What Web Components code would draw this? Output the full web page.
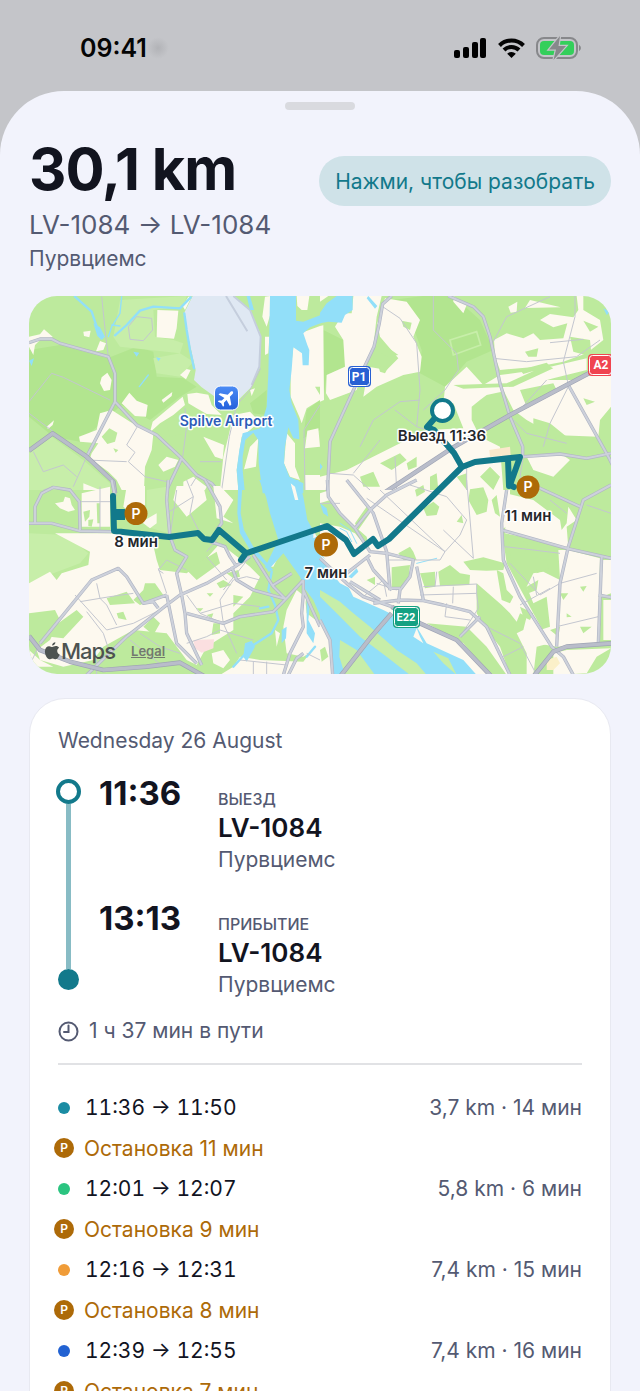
<!DOCTYPE html>
<html lang="ru">
<head>
<meta charset="utf-8">
<meta name="viewport" content="width=device-width, initial-scale=1">
<title>30,1 km</title>
<style>
  body {
    margin: 0;
    font-family: Inter, "Noto Sans", sans-serif;
    color: #12141f;
    --teal: #12798b;
    --muted: #545a72;
    --stop: #ad6a08;
  }
</style>
</head>
<body>
<trip-app>
  <status-bar slot="status" time="09:41"></status-bar>
  <trip-header distance="30,1 km" route="LV-1084 → LV-1084" place="Пурвциемс">Нажми, чтобы разобрать</trip-header>
  <trip-map></trip-map>
  <trip-card date="Wednesday 26 August" total="1 ч 37 мин в пути">
    <trip-end slot="ends" time="11:36" label="ВЫЕЗД" name="LV-1084">Пурвциемс</trip-end>
    <trip-end slot="ends" time="13:13" label="ПРИБЫТИЕ" name="LV-1084">Пурвциемс</trip-end>
    <trip-leg color="#1b8ca3" times="11:36 → 11:50">3,7 km · 14 мин</trip-leg>
    <trip-stop>Остановка 11 мин</trip-stop>
    <trip-leg color="#2bc480" times="12:01 → 12:07">5,8 km · 6 мин</trip-leg>
    <trip-stop>Остановка 9 мин</trip-stop>
    <trip-leg color="#f09c38" times="12:16 → 12:31">7,4 km · 15 мин</trip-leg>
    <trip-stop>Остановка 8 мин</trip-stop>
    <trip-leg color="#2262d2" times="12:39 → 12:55">7,4 km · 16 мин</trip-leg>
    <trip-stop>Остановка 7 мин</trip-stop>
  </trip-card>
</trip-app>

<!-- The ground is drawn in four tiles at 3 units per map unit. -->
<template id="map-template">
  <style>
    :host { display: block; flex: none; position: relative; border-radius: 28px; overflow: hidden; }
    svg { display: block; width: 100%; height: auto; }
    .land { fill: #fdf9ef; }
    .park { fill: #bdea9d; }
    .wood { fill: #b2e58f; }
    .lite { fill: #c7eea9; }
    .water { fill: #92dff9; }
    .creek { fill: none; stroke: #92dff9; stroke-width: 7; stroke-linecap: round; stroke-linejoin: round; }
    .edge, .road, .lane { fill: none; stroke-linejoin: round; }
    .edge { stroke: #b1b6c4; stroke-width: 10; }
    .road { stroke: #cdd1db; stroke-width: 6; }
    .big .edge { stroke: #9fa4b4; stroke-width: 14; }
    .big .road { stroke: #b9bdca; stroke-width: 10; }
    .lane { stroke: #c3c6cf; stroke-width: 3; }
    text { font-weight: 600; text-anchor: middle; }
    .label { font-size: 15px; fill: #25272c; stroke: #fff; stroke-width: 3; stroke-linejoin: round; paint-order: stroke; }
    .airport { font-size: 14px; fill: #2d5cb8; }
    .shield { font-family: Roboto, sans-serif; font-size: 12px; font-weight: 700; fill: #fff; }
    .pin circle { fill: var(--stop); }
    .pin text { font-size: 14px; fill: #fff; }
    .route { fill: none; stroke: var(--teal); stroke-width: 6; stroke-linecap: round; stroke-linejoin: round; }
    .credit {
      position: absolute; left: 14px; bottom: 10px;
      display: flex; align-items: center; color: #4d5351;
      font-size: 22px; line-height: 26px; font-weight: 500; letter-spacing: -1px;
    }
    .credit svg { width: 18px; height: 20px; }
    .credit a { margin-left: 16px; font-size: 13px; letter-spacing: 0; font-weight: 600; color: #72796f; }
  </style>
  <svg viewBox="0 0 582 378" role="img" aria-label="Карта поездки">
    <defs>
      <linearGradient id="plane-bg" x2="0" y2="1"><stop stop-color="#4b8cf5"/><stop offset="1" stop-color="#2460db"/></linearGradient>
    </defs>
    <rect width="582" height="378" class="park"/>
    <g transform="scale(.33333333)">
      <!-- north west -->
      <g transform="translate(-27 -18)">
        <path class="wood" d="M27 180 120 165 262 205 350 170 400 185 410 260 490 265 530 290 480 320 390 390 305 345 180 455 100 440 27 380zM355 85 395 80 400 130 370 155 325 145 330 105zM690 340 740 300 740 375 700 370zM860 360 900 330V420L850 445z"/>
        <path class="lite" d="M300 30 500 18 490 50 400 60 405 140 460 150 490 160 480 190 300 170 280 140zM400 205 480 190 520 215 480 260 410 250zM27 490 95 440 190 510 270 580 270 600 27 600z"/>
        <path class="land" d="M412 60 475 62 470 115 462 146 410 142zM27 140 60 133 72 118 98 140 90 150 60 150 45 165 40 195 27 170zM190 125 212 122 208 142 192 138zM240 153 258 160 250 180 228 184zM245 262 262 248 275 270 270 300 252 303 240 280zM305 340 328 308 350 332 383 345 378 380 345 378zM425 330 457 306 455 318 430 338zM390 427 398 395 440 360 488 320 495 345 460 375 420 400zM502 312 530 308 565 314 575 345 605 375 560 372 530 355 505 340zM480 255 500 237 512 240 498 268zM240 370 275 360 330 395 400 432 395 480 375 530 372 600 305 600 290 570 265 545 210 505 215 490 235 460 180 455 177 440 230 420zM80 410 102 391 98 405 84 417zM415 525 440 500 475 510 465 530 430 545zM550 440 612 465 608 508 585 500zM490 575 520 560 560 590 555 600 490 600zM640 375 690 365 718 395 690 420 665 440 650 540 655 600 600 600 610 500 625 440zM690 470 715 445 708 530 672 538zM190 580 240 600 190 600zM735 20 750 18 752 70 740 110 727 80zM735 140 748 140 745 190 735 195zM505 20 515 20 495 60 488 48zM830 18 868 18 862 60 845 60 832 48zM845 128 900 108 900 330 860 355 845 400 838 380 812 320 812 240 820 172zM862 422 895 415 900 470 855 475zM855 555 900 555 900 600 855 600zM800 430 825 460 825 530 840 570 810 560 792 520zM690 300 705 295 695 318z"/>
        <path class="park" d="M245 440 268 415 292 428 285 455 262 462zM280 475 295 480 287 488zM440 400 490 385 500 430 450 440zM885 290 900 290 900 315z"/>
        <path fill="#dfe8f3" d="M518 18 640 18 690 60 720 130 720 230 695 290 640 345 585 320 545 292 522 270 527 240 500 120 492 70z"/>
        <path fill="none" stroke="#c5cedd" stroke-width="6" d="M618 18 682 124M640 18 690 60 722 140 718 230 695 285"/>
        <path class="water" d="M750 18H828V92L850 95 902 75V100L870 112 850 130 862 165 868 180 866 226 848 226 846 190 820 172 815 240 808 300 815 340 835 390 838 448 820 445 805 412 795 470 792 520 808 560 850 580V610H728L716 520 715 450 700 428 676 450 668 500 668 540 674 600 655 600 650 540 658 480 668 430 720 415 740 350 745 250 748 120zM220 100 240 112 255 140 245 150 232 138zM340 185 358 188 350 200zM408 202 422 205 415 214zM27 212 42 205 35 228zM680 18 690 18 702 60 690 60z"/>
        <path class="creek" d="M165 20 215 65 230 110 240 140M285 136 320 105 360 62 400 50 480 55 512 22M493 70 500 120 510 180 522 235"/>
        <path class="creek" style="stroke-width:4" d="M305 20 300 70 275 110 265 140M275 105 300 108M385 255 358 290"/>
        <path class="lane" d="M245 20 258 145 265 200M27 335 95 250 130 262 270 330M495 355 500 410 488 500M722 235 690 300 650 345 628 440 605 600M855 600 852 420 900 345M352 410 320 465 345 487 325 515 375 560M200 510 320 515M27 370 100 425M40 485 70 545 130 525 170 560M375 560 440 575M540 515 605 515M505 600 530 560M70 600 95 592 140 600M200 500 160 590M325 110 350 80 395 85 398 120 370 152 330 148z"/>
        <path class="edge" d="M27 158 60 147 95 147 120 160 265 200 285 250 285 335 200 500M285 335 350 405 410 435 485 505 530 555 575 580 600 610M485 505 440 600"/>
        <path class="road" d="M27 158 60 147 95 147 120 160 265 200 285 250 285 335 200 500M285 335 350 405 410 435 485 505 530 555 575 580 600 610M485 505 440 600"/>
        <g class="big">
          <path class="edge" d="M27 482 98 430 200 500 280 575 285 610"/>
          <path class="road" d="M27 482 98 430 200 500 280 575 285 610"/>
        </g>
      </g>
      <!-- north east -->
      <g transform="translate(873 -18)">
        <path class="wood" d="M215 30 310 18 400 18 480 90 520 180 440 215 375 290 300 250 305 180 260 60zM10 120 70 150 75 230 20 255 10 330zM640 330 700 290 720 320z"/>
        <path class="land" d="M0 108 10 106 12 330 0 335zM100 18 185 18 170 80 160 170 130 230 110 300 30 330 18 310 20 255 75 230 70 150 45 110 70 70 95 70zM195 25 260 35 300 90 280 140 305 200 300 245 250 255 170 290 130 320 145 230 200 240 235 205 180 140 172 100zM375 290 440 230 490 285 540 255 650 240 800 205 800 240 700 265 570 300 500 315 480 330 455 350 455 390 480 440 540 470 550 600 0 600 0 560 80 540 240 460 320 420 430 415 400 340 370 345zM522 150 560 130 610 145 640 130 660 150 730 145 742 100 700 112 660 90 690 72 760 82 775 60 770 18 790 18 790 60 840 90 850 150 800 190 730 215 650 230 540 240 525 200zM630 30 722 52 615 54zM400 18 440 45 430 70 400 35zM565 50 592 35 590 65 572 68zM545 290 680 270 770 270 873 235 873 350 840 390 835 440 700 435 620 390 580 360zM0 18 25 18 0 35zM620 500 720 490 750 510 700 560 640 540z"/>
        <path class="park" d="M165 145 235 195 200 200 170 180zM175 228 205 232 195 250 180 245zM245 92 275 98 270 120 250 110zM615 185 655 175 650 200 625 200zM790 92 835 110 810 125zM750 140 810 150 815 200 760 185zM400 285 560 280 680 225 700 235 580 290 430 296zM600 300 700 280 710 300 620 350zM640 385 690 400 740 440 720 450 640 415zM790 325 825 335 800 345zM180 520 240 490 260 510 215 540zM260 520 290 500 290 530 265 540zM120 560 160 545 180 590 130 590zM330 560 350 550 355 600 330 600zM480 560 510 530 540 560 520 600zM410 560 440 550 440 600zM600 240 680 218 690 228 610 252z"/>
        <path fill="none" stroke="#c7eea9" stroke-width="5" d="M390 150 470 125 482 165 400 195z"/>
        <path fill="#fae8cb" d="M508 480 570 470 572 498 510 500z"/>
        <path class="water" d="M0 68 20 40 50 18H98V60L75 75 65 98 25 95 0 100zM145 18 172 48 165 56 140 25zM850 55 870 65 860 75zM0 520 8 530 0 540z"/>
        <path class="lane" d="M188 50 240 85 290 160 300 300 290 410M340 18 340 120 410 190 415 240 375 300 310 360M520 205 620 215 770 200 840 150M690 158 790 148M765 18 765 80 730 215 745 285M560 80 690 20M520 155 560 80M745 290 690 400 670 470M300 330 240 335 160 390 120 470M570 380 620 430 740 460M590 370 680 270M225 500 230 600M28 550 100 555 150 600M100 550 180 450M610 500 600 560 660 600M440 530 440 600M225 360 290 410 320 420"/>
        <path class="edge" d="M215 18 188 42 178 100 162 170 105 290 30 455 22 610M385 18 460 50 490 80 510 140 540 280 570 380 608 470 608 500M745 285 865 500 880 530M610 500 720 492 800 505 873 490"/>
        <path class="road" d="M215 18 188 42 178 100 162 170 105 290 30 455 22 610M385 18 460 50 490 80 510 140 540 280 570 380 608 470 608 500M745 285 865 500 880 530M610 500 720 492 800 505 873 490"/>
        <g class="big">
          <path class="edge" d="M873 215 740 285 570 375 395 475 190 610"/>
          <path class="road" d="M873 215 740 285 570 375 395 475 190 610"/>
        </g>
      </g>
      <!-- south west -->
      <g transform="translate(-27 552)">
        <path class="lite" d="M27 160 140 165 205 220 180 250 100 280 27 310zM380 30 440 20 445 160 380 140z"/>
        <path class="land" d="M105 160 270 160 395 175 410 240 420 270 500 280 560 235 600 190 690 260 720 290 690 350 640 400 640 450 560 500 530 555 500 540 440 460 340 450 250 500 220 540 130 560 60 540 50 510 90 480 120 420 105 390 27 400 27 310 90 275 110 300 125 280 205 255 210 215zM105 70 130 65 135 50 150 55 155 75 165 90 145 95 120 85zM185 40 270 20 270 140 185 140zM320 18 375 18 375 120 410 100 410 130 390 145 370 130 310 80zM470 18 550 18 560 60 500 110 460 60zM580 18 600 18 640 60 610 110 640 130 590 115zM660 530 720 540 850 545 900 480 900 585 600 585 640 560zM575 520 610 510 630 540 610 565 580 550zM800 390 830 330 855 350 860 400 900 430 900 500 850 530 800 520 790 440zM765 450 780 460 770 500zM27 510 60 540 100 560 27 560zM740 260 780 190 790 200 760 260z"/>
        <path class="park" d="M190 95 210 90 208 110 195 125zM205 120 220 118 215 140 205 138zM230 70 240 70 240 130 232 130zM260 355 320 335 345 370 270 375zM100 440 170 390 190 410 130 475 90 470zM340 360 370 330 375 310 405 310 430 345 360 375zM290 400 310 395 320 420 295 415zM370 440 400 410 420 430 400 465zM500 270 590 215 600 250 530 300zM560 340 580 340 570 350zM590 310 610 300 635 315 600 325zM620 280 655 270 660 290 640 295zM640 345 670 350 640 380zM560 405 580 400 575 415zM580 430 600 430 600 460 575 465zM530 385 550 385 540 395zM660 480 700 460 710 500 670 530z"/>
        <path fill="#fbdfe0" d="M520 480 582 478 580 505 545 518 525 505z"/>
        <path class="water" d="M718 0H835L850 50 862 120 902 190V410L880 360 850 320 840 290 790 220 745 270 735 262 775 180 750 100 738 50zM655 0 668 0 662 100 672 150 700 200 760 270 745 275 735 255 690 210 660 160 652 100zM675 490 695 482 705 500 680 545 670 530zM785 450 800 440 798 475 785 490zM860 350 870 370 865 420 885 460 880 490 860 460z"/>
        <path class="creek" d="M755 275 745 330 765 375 775 420 755 460 700 495 640 560M720 385 745 380M885 500 860 530"/>
        <path class="land" d="M812 10 825 20 835 60 825 60zM880 150 890 170 880 175zM845 340 860 350 855 370z"/>
        <path class="lane" d="M180 65 270 65M240 20 240 150M500 0 520 50 440 100M520 50 510 100 540 160M180 365 270 350 340 340M200 395 250 460 270 520M165 345 260 450 340 430 440 380M230 310 240 355 260 375 290 435M450 170 470 30M415 265 440 340M430 280 415 270 440 240 500 270M500 345 540 400 610 430 650 520M500 490 560 470 600 450 700 480M610 430 600 360 640 300 680 290 720 300M540 400 640 370 720 380M560 230 620 300M590 180 560 215M690 230 610 330M27 560 60 490M230 530 230 585M360 460 420 500 480 520M740 545 740 585M700 545 700 585M860 520 900 540M660 540 800 555M330 480 430 560"/>
        <path class="edge" d="M27 130 95 130 180 153 275 155M45 130 45 80 65 40 100 22 150 30 178 65 180 150M275 0 285 50M60 490 215 300 295 265 320 290 370 370 440 345M445 0 440 60 450 170 465 210 500 230 470 280 485 345 495 400 500 460 545 555M200 585 320 470 440 375 480 345 560 310 645 260 690 230M440 345 470 490 530 550M555 0 600 80 605 130 590 150M500 400 610 430 660 410 760 395 790 365 850 300M650 260 630 230 615 200 570 185M635 260 650 300 700 330 790 355M700 225 760 320 795 355M760 315 815 280M850 300 850 340 845 400 850 440 810 520 790 585M850 330 900 440M850 520 830 535 805 585M370 370 400 365 415 385"/>
        <path class="road" d="M27 130 95 130 180 153 275 155M45 130 45 80 65 40 100 22 150 30 178 65 180 150M275 0 285 50M60 490 215 300 295 265 320 290 370 370 440 345M445 0 440 60 450 170 465 210 500 230 470 280 485 345 495 400 500 460 545 555M200 585 320 470 440 375 480 345 560 310 645 260 690 230M440 345 470 490 530 550M555 0 600 80 605 130 590 150M500 400 610 430 660 410 760 395 790 365 850 300M650 260 630 230 615 200 570 185M635 260 650 300 700 330 790 355M700 225 760 320 795 355M760 315 815 280M850 300 850 340 845 400 850 440 810 520 790 585M850 330 900 440M850 520 830 535 805 585M370 370 400 365 415 385"/>
        <g class="big">
          <path class="edge" d="M27 468 60 510 150 545 250 570 380 560 480 548 555 590"/>
          <path class="road" d="M27 468 60 510 150 545 250 570 380 560 480 548 555 590"/>
        </g>
      </g>
      <!-- south east -->
      <g transform="translate(873 552)">
        <path class="land" d="M0 40 30 30H570V130L545 150 560 250 640 400 690 490 650 500 640 585H0z"/>
        <path class="land" d="M555 160 700 190 745 205 740 140 770 120 745 80 740 130 725 150 720 120 640 60 560 40zM640 280 670 275 720 300 715 210 745 210 840 235 835 490 710 500 650 490 660 450 690 440 680 350 640 370 620 320zM845 240 873 240 873 340 845 350zM850 360 873 360 873 480 850 480zM700 520 740 510 873 505 830 530 800 580 700 585z"/>
        <path class="park" d="M0 70 30 60 60 100 140 170 150 215 105 160 60 140 0 130zM450 28 490 22 505 60 500 95 470 105 445 60zM285 30 310 15 315 35 290 50zM310 85 340 65 358 80 350 105 320 108zM515 60 530 45 540 110 525 100zM410 125 425 105 430 130zM105 130 140 80 150 100 115 150zM430 245 490 232 555 250 550 270 500 272 450 270zM355 275 390 255 420 280 450 285 448 315 360 318zM215 262 270 255 265 300 240 330 215 320zM300 280 345 275 345 320 315 325zM235 220 270 200 280 215 290 240 250 240zM530 270 550 280 560 330 580 350 570 370 545 360zM470 310 545 375 570 400 590 425 600 400 620 410 610 450 590 460 620 520 620 585 570 585 540 500 500 450 470 400zM590 175 625 190 615 220 575 250 565 190zM645 230 680 240 685 265 650 280zM620 320 655 300 650 330 625 340zM600 380 640 400 630 420 610 410zM140 300 165 290 165 315zM720 340 745 340 730 360zM780 320 800 318 790 335zM690 450 720 440 715 470zM740 400 755 410 740 412zM780 440 815 440 790 460zM320 430 440 440 500 500 560 585 510 585 430 490z"/>
        <path class="water" d="M0 215 30 260 80 310 100 350 190 390 290 440 320 490 430 540 470 585H0z"/>
        <path class="water" d="M0 70 20 85 25 110 10 100zM85 290 110 265 115 275 95 295z"/>
        <path class="lite" d="M0 330 60 365 100 400 150 440 230 510 290 550 320 585H270L200 530 120 470 50 400 0 350zM60 480 110 510 165 585H75L58 530zM340 515 385 535 410 585 370 550z"/>
        <path class="land" d="M0 420 30 480 38 585H0zM280 470 290 445 300 470 310 490zM0 225 60 275 75 290 85 310 110 335 60 310 20 260z"/>
        <path class="park" d="M0 510 15 500 25 530 5 545z"/>
        <path fill="#fbf0c9" d="M680 540 710 530 720 550 700 570 680 570z"/>
        <path class="creek" style="stroke-width:3" d="M60 130 90 150 110 190M290 250 350 235M60 145 80 155 95 185"/>
        <path class="lane" d="M140 55 375 215M180 30 375 215 420 165 440 120M270 15 380 50 440 120M370 150 460 235M440 0 460 235M200 240 360 240 375 215M345 320 350 275M310 320 470 312 470 340 300 345M400 320 398 370M380 370 375 410 450 420M470 340 475 385 420 470M570 250 660 345 720 310 830 280M600 375 690 325M500 440 600 490 650 585M550 530 610 500M710 440 835 410M0 70 60 70M130 350 190 300 200 350M170 310 230 330M555 200 640 210 720 220M690 60 740 100M800 75 873 100M650 345 640 290"/>
        <path class="edge" d="M22 0 25 50 60 100 105 145 150 215 200 220 280 240 270 290 240 330 235 370M105 145 150 90 200 45 290 0M80 0 160 100 200 215 210 330M80 280 150 225M140 230 160 270 215 330M0 235 80 310 130 350 215 380M160 370 240 360 310 362 370 375 450 395 500 440 570 585M290 260 310 360M420 470 480 410M560 30 545 130 550 240 600 350 695 500 730 530 760 585M545 150 740 205 873 235M650 20 780 80M873 15 790 60 745 200 720 310 710 500M845 230 835 490M835 345 873 352M210 325 240 325M0 420 30 480 38 585M90 305 180 360"/>
        <path class="road" d="M22 0 25 50 60 100 105 145 150 215 200 220 280 240 270 290 240 330 235 370M105 145 150 90 200 45 290 0M80 0 160 100 200 215 210 330M80 280 150 225M140 230 160 270 215 330M0 235 80 310 130 350 215 380M160 370 240 360 310 362 370 375 450 395 500 440 570 585M290 260 310 360M420 470 480 410M560 30 545 130 550 240 600 350 695 500 730 530 760 585M545 150 740 205 873 235M650 20 780 80M873 15 790 60 745 200 720 310 710 500M845 230 835 490M835 345 873 352M210 325 240 325M0 420 30 480 38 585M90 305 180 360"/>
        <g class="big">
          <path class="edge" d="M60 590 150 475 215 400M215 380 300 430 410 480 515 590M640 590 700 515 740 500 873 490"/>
          <path class="road" d="M60 590 150 475 215 400M215 380 300 430 410 480 515 590M640 590 700 515 740 500 873 490"/>
        </g>
      </g>
    </g>

    <path class="route" d="M84 200 85 235 140 241 169 237 175 243 183 244 190 234 217 257 212 264M218 257 298 230 317 244 325 258 344 243 349 250 360 243 433 171 446 166 491 161 481 189 485 191M479 163 480 190M433 171 425 157 405 134 398 131 413 114"/>
    <path d="M85 213h11v11H85z" fill="var(--teal)"/>

    <rect x="185.500" y="90" width="24" height="24" rx="6" fill="url(#plane-bg)" stroke="#fff" stroke-width="1"/>
    <path transform="translate(197.500 102) rotate(45)" fill="#fff" d="M0-9c1 0 1.500 1.300 1.500 3v2.800L8 1.200v2L1.500 1.400v3.800l2.200 1.900v1.500L0 7.600l-3.700 1V7.100l2.200-1.900V1.400L-8 3.200v-2l6.500-4.400V-6c0-1.700.5-3 1.500-3z"/>
    <text class="label airport" x="197" y="130">Spilve Airport</text>

    <rect x="319" y="70" width="23" height="21" rx="4" fill="#2860d3"/><rect x="320.500" y="71.500" width="20" height="18" rx="3" fill="none" stroke="#fff"/>
    <text class="shield" x="330" y="85">P1</text>
    <rect x="559" y="58" width="25" height="22" rx="4" fill="#f04450"/><rect x="560.500" y="59.500" width="22" height="19" rx="3" fill="none" stroke="#fff"/>
    <text class="shield" x="572" y="73">A2</text>
    <rect x="364" y="310" width="27" height="22" rx="4" fill="#15a183"/><rect x="365.500" y="311.500" width="24" height="19" rx="3" fill="none" stroke="#fff"/>
    <text class="shield" style="font-size:11px" x="377" y="325">E22</text>

    <circle cx="413.500" cy="114.500" r="10.500" fill="#fff" stroke="var(--teal)" stroke-width="4"/>
    <g class="pin"><circle cx="107" cy="217.500" r="11.500"/><text x="107" y="223">P</text></g>
    <g class="pin"><circle cx="297" cy="248.500" r="12"/><text x="297" y="254">P</text></g>
    <g class="pin"><circle cx="499" cy="191" r="11.500"/><text x="499" y="196">P</text></g>
    <text class="label" x="413" y="145">Выезд 11:36</text>
    <text class="label" x="107" y="251">8 мин</text>
    <text class="label" x="297" y="282">7 мин</text>
    <text class="label" x="499" y="225">11 мин</text>
  </svg>
  <div class="credit">
    <svg viewBox="0 0 18 20" aria-hidden="true"><path fill="currentColor" d="M12.400 1.200c.1 1.500-1.400 3.400-3.300 3.400-.2-1.700 1.500-3.300 3.300-3.400zM9.300 6c.8 0 1.900-.9 3.500-.9 1.400 0 2.600.7 3.300 1.700-2.800 1.700-2.300 5.500.6 6.700-.6 1.700-2.200 4.700-3.900 4.700-1.200 0-1.700-.8-3.200-.8s-2.100.8-3.200.8c-2 0-4.500-4.200-4.500-7.700 0-3.400 2.100-5.300 4.200-5.300 1.500 0 2.500.8 3.200.8z"/></svg>
    <span>Maps</span>
    <a href="#legal">Legal</a>
  </div>
</template>

<script>
class BaseElement extends HTMLElement {
  constructor() {
    super();
    this.attachShadow({ mode: "open" });
  }

  connectedCallback() {
    this.shadowRoot.innerHTML = this.render();
  }

  attr(name) {
    return this.getAttribute(name) || "";
  }
}

class TripApp extends BaseElement {
  render() {
    return `
      <style>
        :host { display: flex; flex-direction: column; height: 100vh; background: #c4c5c9; }
        main {
          flex: 1; min-height: 0; box-sizing: border-box;
          display: flex; flex-direction: column; gap: 24px;
          padding: 11px 29px 0; overflow: hidden;
          background: #f2f3fc; border-radius: 64px 64px 0 0;
        }
        .grabber { width: 70px; height: 8px; border-radius: 4px; background: #d9dadf; align-self: center; flex: none; }
      </style>
      <slot name="status"></slot>
      <main><div class="grabber"></div><slot></slot></main>`;
  }
}

class StatusBar extends BaseElement {
  render() {
    return `
      <style>
        :host { display: flex; flex: none; align-items: center; height: 91px; padding: 4px 58px 0 80px; box-sizing: border-box; color: #050505; }
        time { font-size: 25px; font-weight: 600; }
        .smudge { width: 22px; height: 22px; background: radial-gradient(#b2b3b7, transparent 70%); }
        .icons { display: flex; align-items: center; gap: 11px; margin-left: auto; }
        svg { display: block; }
      </style>
      <time>${this.attr("time")}</time><span class="smudge"></span>
      <div class="icons">
        <svg width="33" height="20" viewBox="0 0 33 20"><rect y="12" width="6" height="8" rx="2"/><rect x="9" y="9" width="6" height="11" rx="2"/><rect x="18" y="4" width="6" height="16" rx="2"/><rect x="26" width="6" height="20" rx="2"/></svg>
        <svg width="27" height="20" viewBox="0 0 27 20"><g fill="none" stroke="#050505" stroke-width="4"><path d="M1.500 7.500a17 17 0 0 1 24 0"/><path d="M6 12a10.600 10.600 0 0 1 15 0"/></g><path d="M13.500 20l-4.300-4.300a6.200 6.200 0 0 1 8.600 0z"/></svg>
        <svg width="46" height="24" viewBox="0 0 46 24"><rect x="1" y="2" width="40" height="20" rx="7" fill="none" stroke="#87888b" stroke-width="2"/><path d="M43 9c2.500.8 2.500 5.200 0 6z" fill="#87888b"/><rect x="4" y="5" width="34" height="14" rx="4" fill="#34cf5b"/><path d="M24 0 13 13.500h7L17.500 24 30 10h-7.500z" fill="#87888b" stroke="#c4c5c9" stroke-width="2.400" paint-order="stroke"/></svg>
      </div>`;
  }
}

class TripHeader extends BaseElement {
  render() {
    return `
      <style>
        :host { display: flex; flex: none; justify-content: space-between; align-items: flex-start; color: var(--muted); }
        h1 { margin: 0; font-size: 58px; line-height: 70px; letter-spacing: -1px; font-weight: 700; color: #12141f; }
        p { margin: 0; }
        .route { font-size: 26px; line-height: 42px; }
        .place { font-size: 21px; line-height: 26px; }
        button {
          margin-top: 22px; padding: 0 16px; height: 50px; border: 0; border-radius: 25px;
          font: inherit; font-size: 21px; color: var(--teal); background: #cfe2e8;
        }
      </style>
      <div>
        <h1>${this.attr("distance")}</h1>
        <p class="route">${this.attr("route")}</p>
        <p class="place">${this.attr("place")}</p>
      </div>
      <button type="button"><slot></slot></button>`;
  }
}

class TripMap extends HTMLElement {
  constructor() {
    super();
    const template = document.getElementById("map-template");
    this.attachShadow({ mode: "open" }).appendChild(template.content.cloneNode(true));
  }
}

class TripCard extends BaseElement {
  render() {
    return `
      <style>
        :host {
          display: block; flex: none; padding: 28px;
          border: 1px solid #e8e9f1; border-radius: 36px;
          background: #fff; color: var(--muted);
        }
        p { margin: 0; font-size: 21px; line-height: 28px; }
        .ends { display: flex; gap: 18px; margin: 22px 0 16px -2px; }
        .rail { display: flex; flex-direction: column; align-items: center; width: 25px; padding: 2px 0 11px; }
        .from, .to { box-sizing: border-box; border-radius: 50%; flex: none; }
        .from { width: 25px; height: 25px; border: 4px solid var(--teal); }
        .line { flex: 1; width: 5px; background: #88bcc5; }
        .to { width: 21px; height: 21px; background: var(--teal); }
        .stops { display: flex; flex-direction: column; gap: 26px; }
        .total { display: flex; align-items: center; gap: 10px; }
        hr { margin: 18px 0 22px; border: 0; height: 2px; background: #e1e2e5; }
      </style>
      <p>${this.attr("date")}</p>
      <div class="ends">
        <div class="rail"><span class="from"></span><span class="line"></span><span class="to"></span></div>
        <div class="stops"><slot name="ends"></slot></div>
      </div>
      <p class="total">
        <svg width="21" height="21" viewBox="0 0 21 21" fill="none" stroke="currentColor" stroke-width="2"><circle cx="10.500" cy="10.500" r="9"/><path d="M10.500 4.500v6.500H6" stroke-linecap="round"/></svg>
        <span>${this.attr("total")}</span>
      </p>
      <hr>
      <slot></slot>`;
  }
}

class TripEnd extends BaseElement {
  render() {
    return `
      <style>
        :host { display: grid; grid-template-columns: 119px auto; align-items: baseline; }
        time { font-size: 33px; line-height: 32px; font-weight: 700; color: #12141f; }
        .label { font-size: 16px; line-height: 26px; font-weight: 500; }
        .name { grid-column: 2; font-size: 26px; line-height: 32px; font-weight: 600; color: #12141f; }
        .place { grid-column: 2; font-size: 21px; line-height: 32px; }
      </style>
      <time>${this.attr("time")}</time>
      <span class="label">${this.attr("label")}</span>
      <span class="name">${this.attr("name")}</span>
      <span class="place"><slot></slot></span>`;
  }
}

class TripLeg extends BaseElement {
  render() {
    return `
      <style>
        :host { display: flex; align-items: center; height: 41px; font-size: 21px; }
        .dot { width: 12px; height: 12px; margin-right: 15px; border-radius: 50%; background: ${this.attr("color")}; }
        .times { color: #12141f; font-variant-numeric: tabular-nums; }
        .sum { margin-left: auto; }
      </style>
      <span class="dot"></span>
      <span class="times">${this.attr("times")}</span>
      <span class="sum"><slot></slot></span>`;
  }
}

class TripStop extends BaseElement {
  render() {
    return `
      <style>
        :host { display: flex; align-items: center; gap: 10px; height: 40px; margin-left: -4px; font-size: 21px; color: var(--stop); }
        .badge {
          width: 20px; height: 20px; border-radius: 50%; background: var(--stop); color: #fff;
          font-size: 12px; line-height: 20px; font-weight: 600; text-align: center;
        }
      </style>
      <span class="badge">P</span>
      <span><slot></slot></span>`;
  }
}

customElements.define("status-bar", StatusBar);
customElements.define("trip-header", TripHeader);
customElements.define("trip-map", TripMap);
customElements.define("trip-end", TripEnd);
customElements.define("trip-leg", TripLeg);
customElements.define("trip-stop", TripStop);
customElements.define("trip-card", TripCard);
customElements.define("trip-app", TripApp);
</script>
</body>
</html>
